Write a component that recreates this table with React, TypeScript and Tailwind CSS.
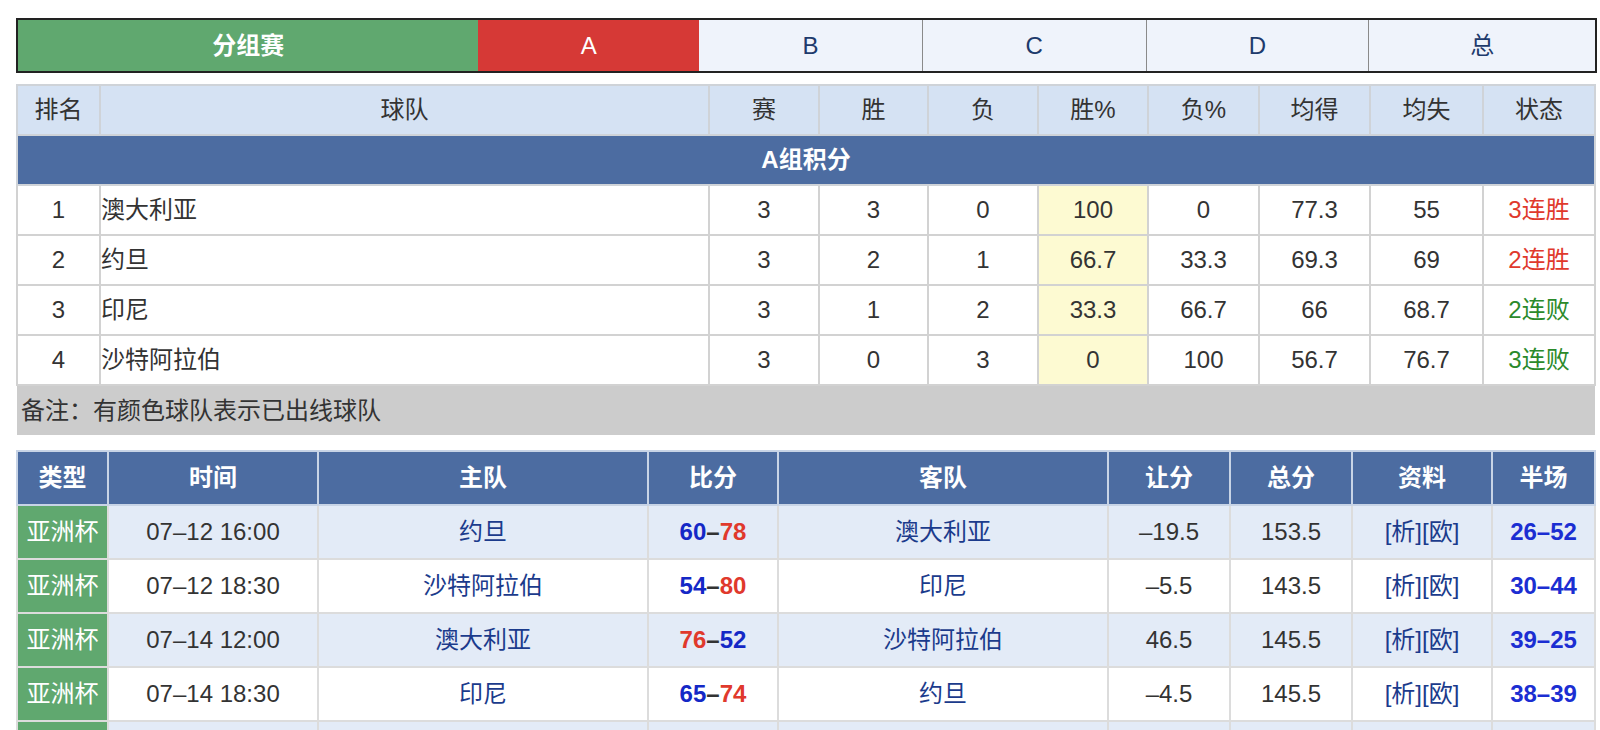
import React from "react";

type Standing = {
  rank: number;
  team: string;
  played: number;
  win: number;
  loss: number;
  winPct: string;
  lossPct: string;
  avgFor: string;
  avgAgainst: string;
  streak: string;
  streakWin: boolean;
};

type Match = {
  time: string;
  home: string;
  away: string;
  homeScore: number;
  awayScore: number;
  spread: string;
  total: string;
  half: string;
};

const tabs = [
  { label: "B", w: "w-[223px]" },
  { label: "C", w: "w-[224px]" },
  { label: "D", w: "w-[223px]" },
  { label: "总", w: "w-[227px]" },
];

const standings: Standing[] = [
  { rank: 1, team: "澳大利亚", played: 3, win: 3, loss: 0, winPct: "100", lossPct: "0", avgFor: "77.3", avgAgainst: "55", streak: "3连胜", streakWin: true },
  { rank: 2, team: "约旦", played: 3, win: 2, loss: 1, winPct: "66.7", lossPct: "33.3", avgFor: "69.3", avgAgainst: "69", streak: "2连胜", streakWin: true },
  { rank: 3, team: "印尼", played: 3, win: 1, loss: 2, winPct: "33.3", lossPct: "66.7", avgFor: "66", avgAgainst: "68.7", streak: "2连败", streakWin: false },
  { rank: 4, team: "沙特阿拉伯", played: 3, win: 0, loss: 3, winPct: "0", lossPct: "100", avgFor: "56.7", avgAgainst: "76.7", streak: "3连败", streakWin: false },
];

const matches: Match[] = [
  { time: "07-12 16:00", home: "约旦", away: "澳大利亚", homeScore: 60, awayScore: 78, spread: "-19.5", total: "153.5", half: "26-52" },
  { time: "07-12 18:30", home: "沙特阿拉伯", away: "印尼", homeScore: 54, awayScore: 80, spread: "-5.5", total: "143.5", half: "30-44" },
  { time: "07-14 12:00", home: "澳大利亚", away: "沙特阿拉伯", homeScore: 76, awayScore: 52, spread: "46.5", total: "145.5", half: "39-25" },
  { time: "07-14 18:30", home: "印尼", away: "约旦", homeScore: 65, awayScore: 74, spread: "-4.5", total: "145.5", half: "38-39" },
  { time: "07-16 12:00", home: "印尼", away: "澳大利亚", homeScore: 53, awayScore: 78, spread: "-22.5", total: "141.5", half: "24-40" },
  { time: "07-16 18:30", home: "约旦", away: "沙特阿拉伯", homeScore: 82, awayScore: 63, spread: "12.5", total: "148.5", half: "41-30" },
];

// column widths, px
const standingCols = [83, 609, 110, 109, 110, 110, 111, 111, 113, 112];
const matchCols = [91, 210, 330, 130, 330, 122, 122, 140, 103];

const dash = (s: string) => s.replace("-", "–");

export default function App() {
  return (
    <div className="min-h-screen bg-white pt-[18px] pl-4 font-['Liberation_Sans','Noto_Sans_CJK_SC',sans-serif] text-[24px] text-[#333]">
      <div className="w-[1581px]">
        {/* group tabs */}
        <div className="flex h-[55px] border-2 border-[#222]">
          <div className="flex w-[461px] items-center justify-center bg-[#60a86f] font-bold text-white">分组赛</div>
          <div className="flex w-[221px] items-center justify-center bg-[#d63936] text-white">A</div>
          {tabs.map((t, i) => (
            <div
              key={t.label}
              className={`flex ${t.w} items-center justify-center bg-[#eff3fb] text-[#1d3a6c] ${i > 0 ? "border-l border-[#8a8a8a]" : ""}`}
            >
              {t.label}
            </div>
          ))}
        </div>

        {/* standings */}
        <table className="mt-[11px] w-[1578px] table-fixed border-collapse">
          <colgroup>
            {standingCols.map((w, i) => (
              <col key={i} style={{ width: w }} />
            ))}
          </colgroup>
          <thead>
            <tr className="h-[50px] bg-[#d5e2f3]">
              {["排名", "球队", "赛", "胜", "负", "胜%", "负%", "均得", "均失", "状态"].map((h) => (
                <th key={h} className="border-2 border-[#cfd3d8] font-normal text-[#333]">
                  {h}
                </th>
              ))}
            </tr>
          </thead>
          <tbody>
            <tr className="h-[50px] bg-[#4c6ca1]">
              <td colSpan={10} className="border-2 border-[#cfd3d8] text-center font-bold text-white">
                A组积分
              </td>
            </tr>
            {standings.map((s) => (
              <tr key={s.rank} className="h-[50px] bg-white text-center">
                <td className="border-2 border-[#d2d2d2]">{s.rank}</td>
                <td className="border-2 border-[#d2d2d2] text-left">{s.team}</td>
                <td className="border-2 border-[#d2d2d2]">{s.played}</td>
                <td className="border-2 border-[#d2d2d2]">{s.win}</td>
                <td className="border-2 border-[#d2d2d2]">{s.loss}</td>
                <td className="border-2 border-[#d2d2d2] bg-[#fdfad2]">{s.winPct}</td>
                <td className="border-2 border-[#d2d2d2]">{s.lossPct}</td>
                <td className="border-2 border-[#d2d2d2]">{s.avgFor}</td>
                <td className="border-2 border-[#d2d2d2]">{s.avgAgainst}</td>
                <td className={`border-2 border-[#d2d2d2] ${s.streakWin ? "text-[#e0392c]" : "text-[#2b8a2b]"}`}>
                  {s.streak}
                </td>
              </tr>
            ))}
            <tr className="h-[50px] bg-[#cccccc]">
              <td colSpan={10} className="pl-1 text-left">
                备注：有颜色球队表示已出线球队
              </td>
            </tr>
          </tbody>
        </table>

        {/* schedule */}
        <table className="mt-[15px] w-[1578px] table-fixed border-collapse">
          <colgroup>
            {matchCols.map((w, i) => (
              <col key={i} style={{ width: w }} />
            ))}
          </colgroup>
          <thead>
            <tr className="h-[54px] bg-[#4c6ca1]">
              {["类型", "时间", "主队", "比分", "客队", "让分", "总分", "资料", "半场"].map((h) => (
                <th key={h} className="border-2 border-[#c8d4e6] font-bold text-white">
                  {h}
                </th>
              ))}
            </tr>
          </thead>
          <tbody>
            {matches.map((m, i) => {
              const homeWin = m.homeScore > m.awayScore;
              return (
                <tr key={i} className={`h-[54px] text-center ${i % 2 === 0 ? "bg-[#e3ebf7]" : "bg-white"}`}>
                  <td className="border-2 border-[#dcdcdc] bg-[#60a86f] text-white">亚洲杯</td>
                  <td className="border-2 border-[#dcdcdc]">{dash(m.time)}</td>
                  <td className="border-2 border-[#dcdcdc] text-[#1b3b8c]">{m.home}</td>
                  <td className="border-2 border-[#dcdcdc] font-bold">
                    <span className={homeWin ? "text-[#e0392c]" : "text-[#1428c6]"}>{m.homeScore}</span>
                    <span className="text-[#333]">–</span>
                    <span className={homeWin ? "text-[#1428c6]" : "text-[#e0392c]"}>{m.awayScore}</span>
                  </td>
                  <td className="border-2 border-[#dcdcdc] text-[#1b3b8c]">{m.away}</td>
                  <td className="border-2 border-[#dcdcdc]">{dash(m.spread)}</td>
                  <td className="border-2 border-[#dcdcdc]">{m.total}</td>
                  <td className="border-2 border-[#dcdcdc] text-[#1b3b8c]">[析][欧]</td>
                  <td className="border-2 border-[#dcdcdc] font-bold text-[#1b2ed2]">{dash(m.half)}</td>
                </tr>
              );
            })}
          </tbody>
        </table>
      </div>
    </div>
  );
}
